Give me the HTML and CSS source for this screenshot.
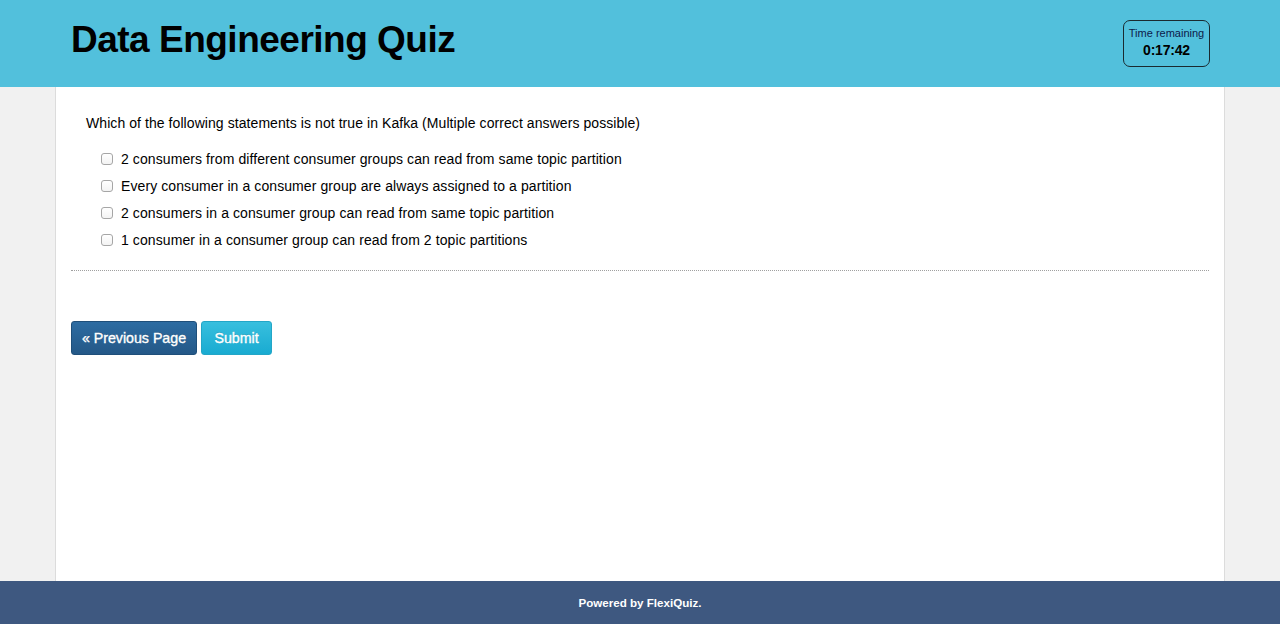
FILE: index.html
```html
<!DOCTYPE html>
<html>
<head>
<meta charset="utf-8">
<link rel="stylesheet" href="styles.css">
</head>
<body>
<header class="topbar">
  <div class="topbar-inner">
    <h1 class="title">Data Engineering Quiz</h1>
    <div class="timer">
      <div class="timer-label">Time remaining</div>
      <div class="timer-value">0:17:42</div>
    </div>
  </div>
</header>
<main class="page">
  <div class="content">
    <div class="question">
      <p class="question-text">Which of the following statements is not true in Kafka (Multiple correct answers possible)</p>
      <ul class="options">
        <li class="option"><span class="box"></span><span>2 consumers from different consumer groups can read from same topic partition</span></li>
        <li class="option"><span class="box"></span><span>Every consumer in a consumer group are always assigned to a partition</span></li>
        <li class="option"><span class="box"></span><span>2 consumers in a consumer group can read from same topic partition</span></li>
        <li class="option"><span class="box"></span><span>1 consumer in a consumer group can read from 2 topic partitions</span></li>
      </ul>
    </div>
    <div class="actions">
      <button class="btn btn-prev">« Previous Page</button>
      <button class="btn btn-submit">Submit</button>
    </div>
  </div>
</main>
<footer class="footer">Powered by FlexiQuiz.</footer>
</body>
</html>
```
FILE: styles.css
```css
* { box-sizing: border-box; }
html, body { margin: 0; padding: 0; height: 100%; }
body {
  background: #f1f1f1;
  font-family: "Liberation Sans", Arial, Helvetica, sans-serif;
  color: #000;
  display: flex;
  flex-direction: column;
  height: 624px;
  overflow: hidden;
}
.topbar {
  background: #52c0dc;
  height: 87px;
  flex: none;
}
.topbar-inner {
  width: 1170px;
  margin: 0 auto;
  padding: 0 15px;
  height: 100%;
  display: flex;
  justify-content: space-between;
  align-items: flex-start;
}
.title {
  margin: 17px 0 0 1px;
  font-size: 37px;
  font-weight: bold;
  line-height: 46px;
  letter-spacing: -0.5px;
}
.timer {
  margin-top: 20px;
  width: 87px;
  height: 47px;
  border: 1px solid #1a2a30;
  border-radius: 7px;
  text-align: center;
  padding-top: 6px;
}
.timer-label {
  font-size: 11px;
  line-height: 13px;
  color: #0c1a4a;
}
.timer-value {
  font-size: 14px;
  font-weight: bold;
  line-height: 18px;
  margin-top: 1px;
  letter-spacing: -0.2px;
}
.page {
  flex: 1;
  width: 1170px;
  margin: 0 auto;
  background: #fff;
  border-left: 1px solid #dcdcdc;
  border-right: 1px solid #dcdcdc;
  padding: 0 15px;
}
.question {
  border-bottom: 1px dotted #a0a0a0;
  padding: 28px 15px 17px;
}
.question-text {
  margin: 0 0 14px;
  font-size: 14px;
  line-height: 16px;
  letter-spacing: 0.07px;
}
.options {
  list-style: none;
  margin: 0;
  padding: 0 0 0 15px;
}
.option {
  display: flex;
  align-items: center;
  height: 27px;
  font-size: 14px;
  letter-spacing: 0.09px;
}
.box {
  width: 12px;
  height: 12px;
  border: 1px solid #a6a6a6;
  border-radius: 3px;
  background: linear-gradient(#fff, #f3f3f3);
  margin-right: 8px;
  flex: none;
}
.actions {
  padding-top: 50px;
  display: flex;
  gap: 4px;
}
.btn {
  font-family: "Liberation Sans", Arial, Helvetica, sans-serif;
  font-size: 14.2px;
  font-weight: normal;
  -webkit-text-stroke: 0.35px #fff;
  color: #fff;
  height: 34px;
  border-radius: 3px;
  padding: 0;
  white-space: nowrap;
  cursor: pointer;
  text-shadow: 0 -1px 0 rgba(0,0,0,0.15);
}
.btn-prev {
  width: 126px;
  background: linear-gradient(#2d6ca2, #245887);
  border: 1px solid #1f4f7a;
}
.btn-submit {
  width: 71px;
  background: linear-gradient(#38bfde, #19abd1);
  border: 1px solid #23a6c7;
}
.footer {
  flex: none;
  height: 43px;
  background: #3e5880;
  color: #fff;
  font-size: 11.6px;
  font-weight: bold;
  text-align: center;
  line-height: 44px;
}
```
